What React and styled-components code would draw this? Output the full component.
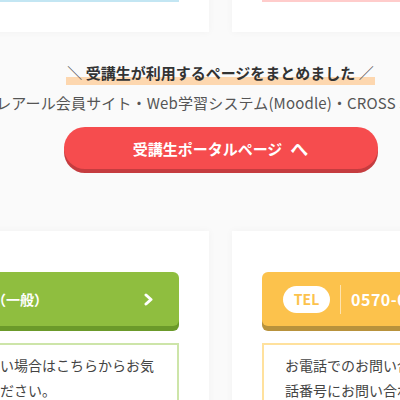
import React from "react";
import styled, { createGlobalStyle } from "styled-components";

const GlobalStyle = createGlobalStyle`
  html, body {
    margin: 0;
    padding: 0;
  }
  body {
    background: #fafafa;
    overflow: hidden;
    font-family: "Noto Sans CJK JP", "Noto Sans", sans-serif;
    color: #333;
  }
`;

const Page = styled.div`
  width: 799px;
  margin: -138px 0 0 -179px;
`;

const CardGrid = styled.div`
  display: grid;
  grid-template-columns: 1fr 1fr;
  gap: 23px;
  margin-top: ${(p) => p.$offset || 0}px;
`;

const Card = styled.div`
  background: #fff;
  box-shadow: 0 0 8px rgba(0, 0, 0, 0.04);
  padding: ${(p) => (p.$top ? "40px 30px 30px" : "41px 30px 60px")};
`;

const LinkBox = styled.div`
  box-sizing: border-box;
  height: 100px;
  background: #fff;
  border: 2px solid ${(p) => p.$color};
`;

const Intro = styled.section`
  margin-top: 29px;
  display: flex;
  flex-direction: column;
  align-items: center;
`;

const Heading = styled.h2`
  margin: 0;
  font-size: 15px;
  line-height: 24px;
  font-weight: 700;
  color: #333;
  white-space: nowrap;
  padding: 0 1px;
  background: linear-gradient(transparent 66%, #fdd7af 66%);
`;

const Slash = styled.span`
  font-weight: 400;
  color: #555;
`;

const Lead = styled.p`
  margin: 7px 0 0;
  font-size: 15px;
  line-height: 22px;
  letter-spacing: 0.15px;
  color: #555;
  white-space: nowrap;
`;

const PortalButton = styled.a`
  margin-top: 13px;
  width: 314px;
  height: 42px;
  border-radius: 21px;
  background: #f64c4e;
  box-shadow: 0 4px 0 #c53c3f;
  display: flex;
  align-items: center;
  justify-content: center;
  color: #fff;
  font-size: 15px;
  font-weight: 700;
  text-decoration: none;
`;

const PortalArrow = styled.span`
  font-size: 18px;
  margin-left: 8px;
`;

const ActionButton = styled.a`
  box-sizing: border-box;
  height: 54px;
  border-radius: 6px;
  background: ${(p) => p.$bg};
  box-shadow: 0 5px 0 ${(p) => p.$shade};
  display: flex;
  align-items: center;
  justify-content: ${(p) => (p.$split ? "space-between" : "flex-start")};
  padding: ${(p) => p.$pad};
  color: #fff;
  font-weight: 700;
  text-decoration: none;
`;

const ButtonLabel = styled.span`
  font-size: 14px;
`;

const TelPill = styled.span`
  width: 47px;
  height: 27px;
  border-radius: 14px;
  background: #fff;
  color: #fcc24c;
  font-size: 14px;
  font-weight: 700;
  display: flex;
  align-items: center;
  justify-content: center;
`;

const Divider = styled.span`
  width: 1px;
  height: 29px;
  margin: 0 10px;
  background: rgba(255, 255, 255, 0.55);
`;

const TelNumber = styled.span`
  font-size: 16px;
  letter-spacing: 0.5px;
`;

const InfoBox = styled.div`
  margin-top: 17px;
  border: 2px solid ${(p) => p.$color};
  padding: 8px 21px;
  font-size: 14px;
  line-height: 25px;
  color: #444;
`;

const Chevron = () => (
  <svg width="9" height="13" viewBox="0 0 9 13">
    <polyline
      points="2,2 7,6.5 2,11"
      fill="none"
      stroke="#fff"
      strokeWidth="3"
      strokeLinecap="round"
      strokeLinejoin="round"
    />
  </svg>
);

export default function App() {
  return (
    <>
      <GlobalStyle />
      <Page>
        <CardGrid>
          <Card $top>
            <LinkBox $color="#c3e6f3" />
          </Card>
          <Card $top>
            <LinkBox $color="#ffcccb" />
          </Card>
        </CardGrid>

        <Intro>
          <Heading>
            <Slash>＼</Slash> 受講生が利用するページをまとめました <Slash>／</Slash>
          </Heading>
          <Lead>クレアール会員サイト・Web学習システム(Moodle)・CROSS SCHOOL</Lead>
          <PortalButton href="#">
            受講生ポータルページ<PortalArrow>へ</PortalArrow>
          </PortalButton>
        </Intro>

        <CardGrid $offset={62}>
          <Card>
            <ActionButton href="#" $bg="#8fbe3f" $shade="#6b9a2a" $pad="0 26px 0 57px" $split>
              <ButtonLabel>お問い合わせ（一般）</ButtonLabel>
              <Chevron />
            </ActionButton>
            <InfoBox $color="#cde5a9">
              お電話がつながらない場合はこちらからお気軽にお問い合わせください。
            </InfoBox>
          </Card>
          <Card>
            <ActionButton href="#" $bg="#fcc24c" $shade="#b8923c" $pad="0 0 0 21px">
              <TelPill>TEL</TelPill>
              <Divider />
              <TelNumber>0570-064-464</TelNumber>
            </ActionButton>
            <InfoBox $color="#ffe19d">
              お電話でのお問い合わせは、平日に下記の電話番号にお問い合わせください。
            </InfoBox>
          </Card>
        </CardGrid>
      </Page>
    </>
  );
}
